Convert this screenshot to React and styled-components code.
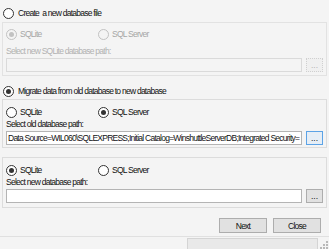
import React from "react";
import styled, { createGlobalStyle, css } from "styled-components";

const GlobalStyle = createGlobalStyle`
  html, body {
    margin: 0;
    padding: 0;
    background: #f4f4f4;
  }
  body {
    font-family: "Liberation Sans", Arial, sans-serif;
    font-size: 8.5px;
    letter-spacing: -0.75px;
    color: #111111;
  }
`;

function Radio({ checked, disabled }) {
    return (
        <RadioCircle $disabled={disabled}>
            {checked && <RadioDot $disabled={disabled} />}
        </RadioCircle>
    );
}

function PathPicker({ value, disabled, focused }) {
    return (
        <PathRow>
            <PathInput $disabled={disabled}>{value}</PathInput>
            <BrowseButton $disabled={disabled} $focused={focused}>...</BrowseButton>
        </PathRow>
    );
}

function App() {
    return (
        <Window>
            <GlobalStyle />
            <OptionRow $top={7}>
                <Radio />
                <OptionText>Create&nbsp; a new database file</OptionText>
            </OptionRow>

            <GroupBox $disabled $top={3} $height={54}>
                <ChoiceLine $top={6}>
                    <Choice $disabled>
                        <Radio checked disabled />
                        SQLite
                    </Choice>
                    <Choice $disabled>
                        <Radio disabled />
                        SQL Server
                    </Choice>
                </ChoiceLine>
                <Caption $disabled $top={5}>Select new SQLite database path:</Caption>
                <PathPicker disabled />
            </GroupBox>

            <OptionRow $top={9}>
                <Radio checked />
                <OptionText>Migrate data from old database to new database</OptionText>
            </OptionRow>

            <GroupBox $top={2} $height={49}>
                <ChoiceLine $top={7}>
                    <Choice>
                        <Radio />
                        SQLite
                    </Choice>
                    <Choice>
                        <Radio checked />
                        SQL Server
                    </Choice>
                </ChoiceLine>
                <Caption $top={0}>Select old database path:</Caption>
                <PathPicker
                    focused
                    value="Data Source=WIL060\SQLEXPRESS;Initial Catalog=WinshuttleServerDB;Integrated Security="
                />
            </GroupBox>

            <GroupBox $top={9} $height={51}>
                <ChoiceLine $top={7}>
                    <Choice>
                        <Radio checked />
                        SQLite
                    </Choice>
                    <Choice>
                        <Radio />
                        SQL Server
                    </Choice>
                </ChoiceLine>
                <Caption $top={0}>Select new database path:</Caption>
                <PathPicker />
            </GroupBox>

            <Footer>
                <PushButton>Next</PushButton>
                <PushButton>Close</PushButton>
            </Footer>

            <StatusBar>
                <StatusPanel />
                <Grip>
                    <svg width="8" height="8" viewBox="0 0 8 8">
                        {[[6, 0], [6, 3], [3, 3], [6, 6], [3, 6], [0, 6]].map(([x, y], i) => (
                            <rect key={i} x={x} y={y} width="2" height="2" fill="#b9b9b9" />
                        ))}
                    </svg>
                </Grip>
            </StatusBar>
        </Window>
    );
}

export default App;

const Window = styled.div`
  width: 329px;
  height: 249px;
  display: flex;
  flex-direction: column;
  overflow: hidden;
  background: #f4f4f4;
`;

const OptionRow = styled.div`
  display: flex;
  align-items: center;
  gap: 4px;
  height: 12px;
  margin-top: ${p => p.$top}px;
  padding-left: 3px;
`;

const OptionText = styled.span`
  line-height: 12px;
`;

const RadioCircle = styled.span`
  box-sizing: border-box;
  width: 11px;
  height: 11px;
  flex-shrink: 0;
  border-radius: 50%;
  border: 1px solid ${p => (p.$disabled ? "#c2c2c2" : "#333333")};
  background: ${p => (p.$disabled ? "#f4f4f4" : "#ffffff")};
  display: grid;
  place-items: center;
`;

const RadioDot = styled.span`
  width: 5px;
  height: 5px;
  border-radius: 50%;
  background: ${p => (p.$disabled ? "#c2c2c2" : "#333333")};
`;

const GroupBox = styled.div`
  box-sizing: border-box;
  margin: ${p => p.$top}px 2px 0 2px;
  height: ${p => p.$height}px;
  border: 1px solid ${p => (p.$disabled ? "#e2e2e2" : "#dcdcdc")};
  padding: 0 0 0 3px;
  display: flex;
  flex-direction: column;
`;

const ChoiceLine = styled.div`
  display: grid;
  grid-template-columns: 92px auto;
  margin-top: ${p => p.$top}px;
  height: 11px;
`;

const Choice = styled.label`
  display: flex;
  align-items: center;
  gap: 3px;
  line-height: 11px;
  color: ${p => (p.$disabled ? "#a6a6a6" : "inherit")};
`;

const Caption = styled.div`
  margin-top: ${p => p.$top}px;
  height: 12px;
  line-height: 12px;
  color: ${p => (p.$disabled ? "#b2b2b2" : "inherit")};
`;

const PathRow = styled.div`
  display: flex;
  align-items: center;
  gap: 4px;
  margin-top: 1px;
`;

const PathInput = styled.div`
  box-sizing: border-box;
  width: 296px;
  height: 14px;
  padding: 0 1px;
  line-height: 12px;
  white-space: nowrap;
  overflow: hidden;
  background: ${p => (p.$disabled ? "#f4f4f4" : "#ffffff")};
  border: 1px solid ${p => (p.$disabled ? "#dadada" : "#b4b4b4")};
`;

const buttonFace = css`
  box-sizing: border-box;
  display: grid;
  place-items: center;
  font-family: inherit;
  font-size: 8.5px;
  color: #111111;
  background: #e1e1e1;
  border: 1px solid #adadad;
  padding: 0;
`;

const BrowseButton = styled.div`
  ${buttonFace}
  width: 17px;
  height: 14px;
  line-height: 10px;
  letter-spacing: 0;
  ${p =>
        p.$disabled &&
        css`
      color: #b5b5b5;
      background: #f0f0f0;
      border: 1px dotted #d0d0d0;
    `}
  ${p =>
        p.$focused &&
        css`
      border-color: #5ca3e6;
      background: #e6eef6;
    `}
`;

const Footer = styled.div`
  display: flex;
  justify-content: flex-end;
  gap: 6px;
  margin-top: 10px;
  padding-right: 8px;
`;

const PushButton = styled.div`
  ${buttonFace}
  width: 48px;
  height: 15px;
`;

const StatusBar = styled.div`
  margin-top: auto;
  height: 12px;
  border-top: 1px solid #e0e0e0;
  display: flex;
  align-items: flex-end;
  justify-content: flex-end;
`;

const StatusPanel = styled.div`
  box-sizing: border-box;
  width: 131px;
  height: 11px;
  background: #e9e9e9;
  border: 1px solid #d4d4d4;
  border-bottom: none;
`;

const Grip = styled.div`
  width: 10px;
  height: 11px;
  display: flex;
  align-items: flex-end;
  justify-content: flex-end;
  padding-right: 1px;
`;
